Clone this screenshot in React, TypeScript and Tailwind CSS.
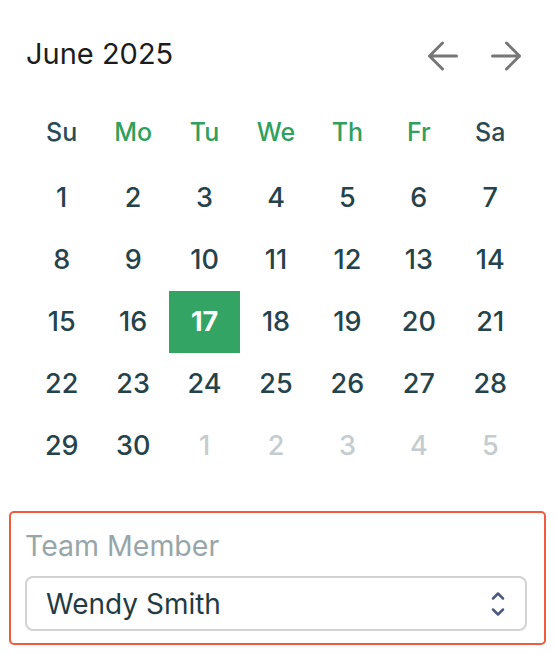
import { useState } from 'react';

const weekDays = ['Su', 'Mo', 'Tu', 'We', 'Th', 'Fr', 'Sa'];

interface DayCell {
  day: number;
  outside: boolean;
}

// June 2025 starts on a Sunday, so no leading days
const buildMonth = (): DayCell[] => {
  const cells: DayCell[] = [];
  for (let d = 1; d <= 30; d++) cells.push({ day: d, outside: false });
  for (let d = 1; d <= 5; d++) cells.push({ day: d, outside: true });
  return cells;
};

function ArrowIcon({ dir }: { dir: 'left' | 'right' }) {
  return (
    <svg width="30" height="30" viewBox="0 0 30 30" fill="none" stroke="#767676" strokeWidth="3" strokeLinecap="round" strokeLinejoin="round">
      {dir === 'left' ? (
        <path d="M28.5 15H1.5M1.5 15L14.5 2M1.5 15L14.5 28" />
      ) : (
        <path d="M1.5 15H28.5M28.5 15L15.5 2M28.5 15L15.5 28" />
      )}
    </svg>
  );
}

function UpDownIcon() {
  return (
    <svg width="18" height="30" viewBox="0 0 18 30" fill="none" stroke="#4b5a80" strokeWidth="2.5" strokeLinecap="round" strokeLinejoin="round">
      <path d="M4 9.5L9 4.5L14 9.5" />
      <path d="M4 20.5L9 25.5L14 20.5" />
    </svg>
  );
}

export default function App() {
  const [selected, setSelected] = useState(17);
  const [member, setMember] = useState('Wendy Smith');
  const days = buildMonth();

  return (
    <div className="min-h-screen bg-white font-['Inter',sans-serif]">
      <div className="px-[26px] pt-[37px]">
        {/* month header */}
        <div className="flex items-center justify-between h-[34px]">
          <h1 className="text-[29px] leading-[34px] font-normal text-[#1c1c1c]">June 2025</h1>
          <div className="flex items-center gap-[33px] pr-[9px] pt-[3px]">
            <button className="flex"><ArrowIcon dir="left" /></button>
            <button className="flex"><ArrowIcon dir="right" /></button>
          </div>
        </div>

        <div className="mt-[31px] w-[500px]">
          <div className="grid grid-cols-7 mb-[3px]">
            {weekDays.map((d, i) => (
              <div
                key={d}
                className={`h-[62px] flex items-center justify-center text-[25px] font-medium ${
                  i === 0 || i === 6 ? 'text-[#2b4b55]' : 'text-[#2fa05d]'
                }`}
              >
                {d}
              </div>
            ))}
          </div>
          <div className="grid grid-cols-7">
            {days.map((c, i) => {
              const isSel = !c.outside && c.day === selected;
              return (
                <button
                  key={i}
                  onClick={() => !c.outside && setSelected(c.day)}
                  className={`h-[62px] flex items-center justify-center text-[27px] ${
                    isSel
                      ? 'bg-[#33a463] text-white font-bold'
                      : c.outside
                      ? 'text-[#c3ccce] font-medium'
                      : 'text-[#24434b] font-medium'
                  }`}
                >
                  {c.day}
                </button>
              );
            })}
          </div>
        </div>
      </div>

      {/* team member field */}
      <div className="mx-[9px] mt-[34px] w-[537px] border-2 border-[#ef5a40] rounded-[5px] pl-[14px] pr-[17px] pt-[16px] pb-[12px]">
        <label className="block text-[28.5px] leading-[34px] text-[#97a6a9]">Team Member</label>
        <div className="mt-[13px] h-[55px] border-2 border-[#d2d2d2] rounded-[8px] flex items-center justify-between pl-[19px] pr-[18px]">
          <span className="text-[28px] leading-[34px] text-[#1f3c44]">{member}</span>
          <button onClick={() => setMember(member)} className="flex">
            <UpDownIcon />
          </button>
        </div>
      </div>
    </div>
  );
}
